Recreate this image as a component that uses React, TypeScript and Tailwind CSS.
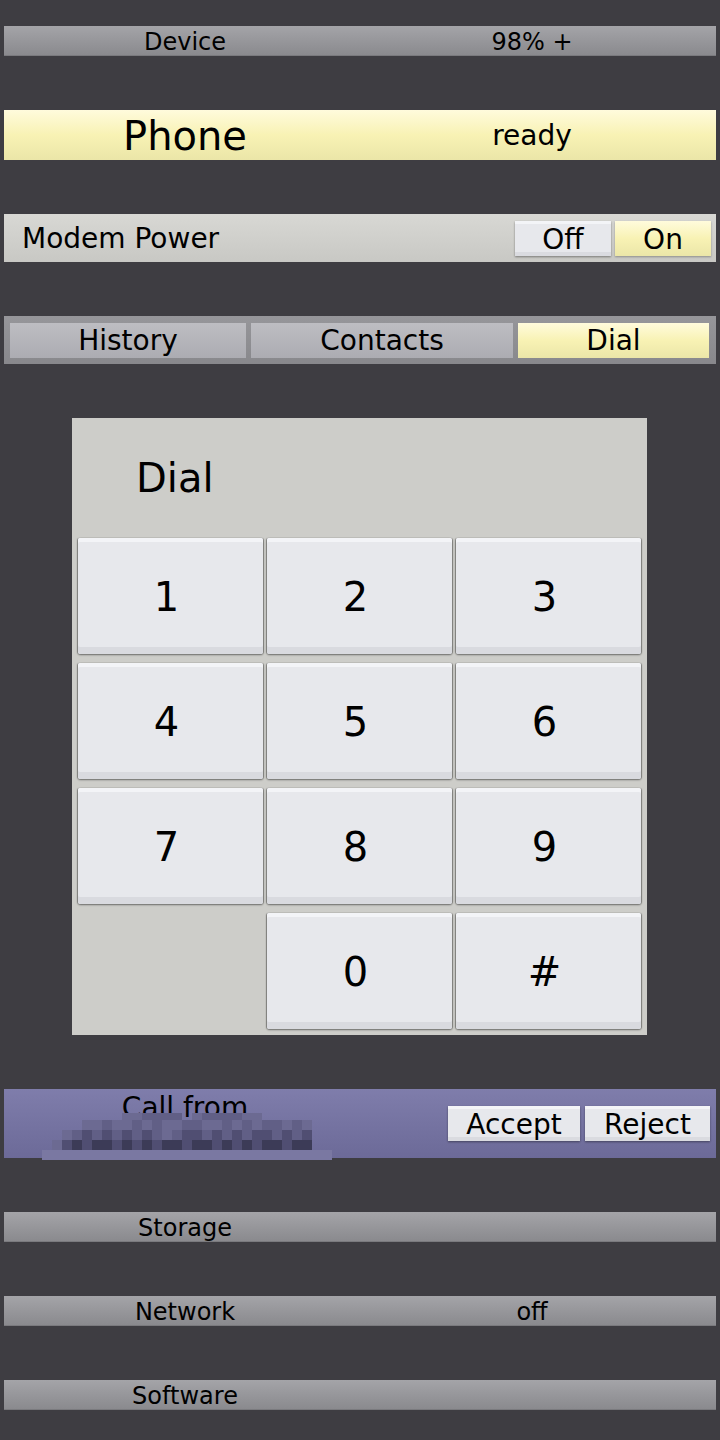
import React from 'react';

const font = { fontFamily: '"DejaVu Sans", "Liberation Sans", sans-serif' };

// pixelated caller id, 10px blocks
const mosaic = [
  '........aabbbb.abbbbaa.......',
  '....aabaababaabbaabababbaba..',
  '..abcbcbcbcbabccbcbcbccbcbc..',
  '.acdcddcdcdcddcddcdcdcddcdd..',
  'lllllllllllllllllllllllllllll',
];
const shade: Record<string, string> = {
  l: '#7a78a2',
  a: '#6c6a92',
  b: '#615f86',
  c: '#504e72',
  d: '#3c3b57',
};

const GrayBar = ({ label, value }: { label: string; value?: string }) => (
  <div className="mx-1 h-[30px] flex items-center pt-[2px] bg-gradient-to-b from-[#a4a4a8] to-[#8a8a8e] border-b border-[#7a7a7e] text-[24px] text-black">
    <div className="w-[362px] text-center">{label}</div>
    <div className="w-[332px] text-center">{value}</div>
  </div>
);

const Key = ({ k }: { k: string }) => (
  <div className="h-[116px] flex items-center justify-center pt-[2px] pr-[8px] rounded-[2px] bg-[#e7e8ec] shadow-[inset_0_4px_0_#f3f4f7,inset_0_-7px_0_#d9dadf,0_1px_2px_rgba(0,0,0,0.45),-1px_0_1px_rgba(0,0,0,0.3),1px_0_1px_rgba(0,0,0,0.3)] text-[40px] text-black">
    {k}
  </div>
);

const btn =
  'h-[35px] flex items-center justify-center pt-[2px] bg-[#e7e8ec] shadow-[inset_0_3px_0_#f3f4f7,inset_0_-4px_0_#dadbe0,0_1px_2px_rgba(0,0,0,0.4)]';
const yellow = 'bg-gradient-to-b from-[#fffbdc] via-[#f8f2b4] to-[#ebe6a8]';

export default function App() {
  const keys = ['1', '2', '3', '4', '5', '6', '7', '8', '9', '', '0', '#'];
  return (
    <div style={font} className="min-h-[1440px] w-[720px] bg-[#3e3d42] pt-[26px] flex flex-col gap-[54px] leading-none">
      <GrayBar label="Device" value="98% +" />

      <div className={`mx-1 h-[50px] flex items-center pt-[2px] ${yellow} text-black`}>
        <div className="w-[362px] text-center text-[40px]">Phone</div>
        <div className="w-[332px] text-center text-[28px]">ready</div>
      </div>

      <div className="mx-1 h-[48px] flex items-center bg-gradient-to-b from-[#d8d8d4] to-[#c8c8c4] pl-[18px] pr-[5px] text-[28px] text-black">
        <div className="flex-1 pt-[2px]">Modem Power</div>
        <div className="flex gap-[4px] pt-[1px]">
          <div className={`w-[96px] ${btn}`}>Off</div>
          <div className={`w-[96px] h-[35px] flex items-center justify-center pt-[2px] ${yellow} shadow-[0_1px_2px_rgba(0,0,0,0.3)]`}>On</div>
        </div>
      </div>

      <div className="mx-1 h-[48px] flex items-center gap-[5px] pl-[6px] bg-gradient-to-b from-[#96969a] to-[#88888c] text-[28px] text-black">
        <div className="w-[236px] h-[35px] flex items-center justify-center pt-[2px] bg-gradient-to-b from-[#bdbdc2] to-[#acacb2]">History</div>
        <div className="w-[262px] h-[35px] flex items-center justify-center pt-[2px] bg-gradient-to-b from-[#bdbdc2] to-[#acacb2]">Contacts</div>
        <div className={`w-[191px] h-[35px] flex items-center justify-center pt-[2px] ${yellow}`}>Dial</div>
      </div>

      <div className="ml-[72px] w-[575px] bg-[#cdcdc9] px-[6px] pb-[6px]">
        <div className="h-[120px] flex items-center pl-[58px] text-[40px] text-black">Dial</div>
        <div className="grid grid-cols-3 gap-x-[4px] gap-y-[9px]">
          {keys.map((k, i) => (k ? <Key key={i} k={k} /> : <div key={i} />))}
        </div>
      </div>

      <div className="mx-1 h-[69px] flex items-center bg-gradient-to-b from-[#7f7dab] to-[#6c6a98] pr-[6px] text-[28px] text-black">
        <div className="w-[362px] self-start relative h-full">
          <div className="absolute left-0 right-0 top-[5px] text-center">Call from</div>
          <svg className="absolute left-[38px] top-[24px]" width="290" height="48">
            {mosaic.map((row, r) =>
              row.split('').map((ch, c) =>
                ch === '.' ? null : (
                  <rect key={r + '-' + c} x={c * 10} y={r === 0 ? 0 : r * 10 - 3} width="10" height={r === 0 ? 7 : 10} fill={shade[ch]} />
                )
              )
            )}
          </svg>
        </div>
        <div className="flex-1" />
        <div className="flex gap-[5px]">
          <div className={`w-[132px] ${btn}`}>Accept</div>
          <div className={`w-[125px] ${btn}`}>Reject</div>
        </div>
      </div>

      <GrayBar label="Storage" />
      <GrayBar label="Network" value="off" />
      <GrayBar label="Software" />
    </div>
  );
}
